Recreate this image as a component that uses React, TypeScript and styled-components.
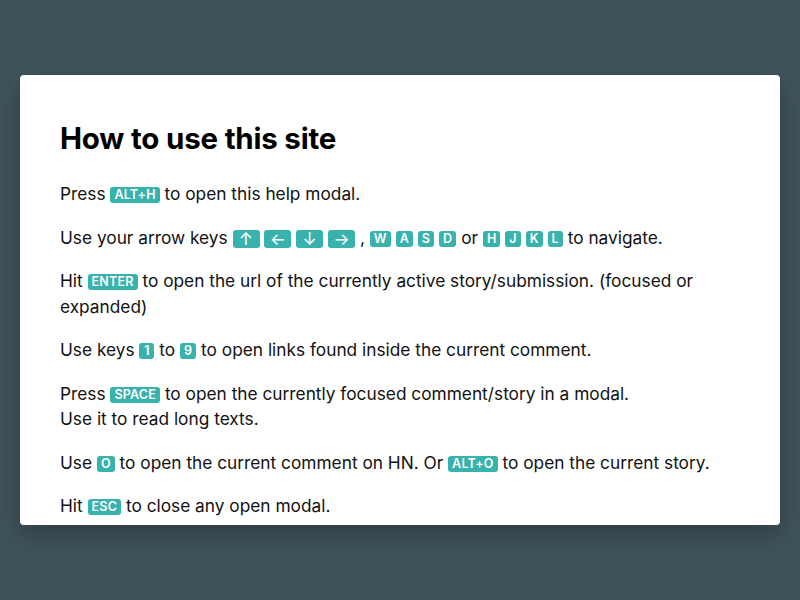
import React from "react";
import styled, { createGlobalStyle } from "styled-components";

const Global = createGlobalStyle`
  html, body { margin: 0; padding: 0; height: 100%; }
  body {
    background: #3f535a;
    font-family: Inter, "Liberation Sans", sans-serif;
    color: #111;
  }
`;

const Page = styled.div`
  width: 800px;
  height: 600px;
  display: flex;
  align-items: center;
  justify-content: center;
`;

const Modal = styled.div`
  box-sizing: border-box;
  width: 760px;
  height: 450px;
  background: #fff;
  border-radius: 4px;
  padding: 41px 40px 0;
  overflow: hidden;
  box-shadow: 0 10px 25px rgba(0, 0, 0, 0.25);
`;

const Title = styled.h1`
  margin: 0 0 21px;
  font-size: 29.5px;
  font-weight: 700;
  line-height: 44px;
  color: #000;
  letter-spacing: -0.2px;
`;

const Para = styled.p`
  margin: 0 0 18px;
  font-size: 17.3px;
  line-height: 25.5px;
  color: #111;
`;

const Key = styled.kbd<{ $arrow?: boolean }>`
  display: inline-block;
  box-sizing: border-box;
  text-align: center;
  vertical-align: ${(p) => (p.$arrow ? "-1px" : "1px")};
  background: #38b2ac;
  color: #fff;
  font-family: Inter, "Liberation Sans", sans-serif;
  font-size: ${(p) => (p.$arrow ? "17px" : "12.5px")};
  font-weight: ${(p) => (p.$arrow ? 400 : 600)};
  height: ${(p) => (p.$arrow ? "18px" : "16px")};
  line-height: ${(p) => (p.$arrow ? "18px" : "16px")};
  min-width: ${(p) => (p.$arrow ? "27px" : "15px")};
  padding: 0 4px;
  border-radius: 3px;
  letter-spacing: 0.2px;
`;

const K = ({ children }: { children: React.ReactNode }) => <Key>{children}</Key>;
const A = ({ children }: { children: React.ReactNode }) => <Key $arrow>{children}</Key>;

export default function App() {
  return (
    <>
      <Global />
      <Page>
        <Modal>
          <Title>How to use this site</Title>
          <Para>
            Press <K>ALT+H</K> to open this help modal.
          </Para>
          <Para>
            Use your arrow keys <A>↑</A> <A>←</A> <A>↓</A> <A>→</A> , <K>W</K> <K>A</K> <K>S</K> <K>D</K> or{" "}
            <K>H</K> <K>J</K> <K>K</K> <K>L</K> to navigate.
          </Para>
          <Para>
            Hit <K>ENTER</K> to open the url of the currently active story/submission. (focused or expanded)
          </Para>
          <Para>
            Use keys <K>1</K> to <K>9</K> to open links found inside the current comment.
          </Para>
          <Para>
            Press <K>SPACE</K> to open the currently focused comment/story in a modal.
            <br />
            Use it to read long texts.
          </Para>
          <Para>
            Use <K>O</K> to open the current comment on HN. Or <K>ALT+O</K> to open the current story.
          </Para>
          <Para>
            Hit <K>ESC</K> to close any open modal.
          </Para>
        </Modal>
      </Page>
    </>
  );
}
